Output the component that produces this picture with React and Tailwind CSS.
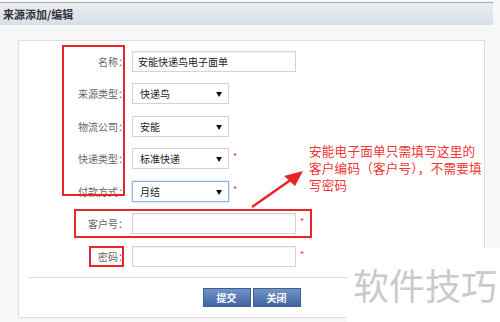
import React from 'react'

const rows = [
  { label: '名称：', type: 'input', value: '安能快递鸟电子面单' },
  { label: '来源类型：', type: 'select', value: '快递鸟' },
  { label: '物流公司：', type: 'select', value: '安能' },
  { label: '快递类型：', type: 'select', value: '标准快递', required: true },
  { label: '付款方式：', type: 'select', value: '月结', required: true, focused: true },
  { label: '客户号：', type: 'input', value: '', required: true },
  { label: '密码：', type: 'input', value: '', required: true },
]

const FormRow = ({ row }) => {
  return (
    <div className="flex items-center h-[20px]">
      <div className="w-[109px] text-right text-[10px] text-[#666]">{row.label}</div>
      {row.type === 'input' ? (
        <div className="ml-[4px] w-[164px] h-[21px] border border-[#d4d4d4] bg-white shadow-[inset_0_1px_1px_rgba(0,0,0,0.06)] flex items-center px-[5px] text-[10px] text-[#222]">
          {row.value}
        </div>
      ) : (
        <div
          className={`ml-[4px] w-[97px] h-[21px] border bg-white flex items-center justify-between pl-[7px] pr-[6px] text-[10px] text-[#222] ${
            row.focused ? 'border-[#8fb3e0] shadow-[0_0_2px_#a9c7ee]' : 'border-[#d4d4d4]'
          }`}
        >
          <span>{row.value}</span>
          <span className="text-[6px] text-black">▼</span>
        </div>
      )}
      {row.required && <span className="ml-[4px] text-[9px] text-[#e33] -mt-[4px]">*</span>}
    </div>
  )
}

export default function App() {
  return (
    <div
      className="relative w-[500px] h-[322px] overflow-hidden bg-[#f7f7f7]"
      style={{ fontFamily: '"Noto Sans CJK SC", "Noto Sans", sans-serif' }}
    >
      {/* Title bar */}
      <div className="mt-[2px] mr-[7px] h-[23px] border-t border-[#a9a9a9] bg-gradient-to-b from-[#e9edf2] to-[#d8dfe8] flex items-center pl-[3px]">
        <span className="text-[11px] font-bold text-[#333]">来源添加/编辑</span>
      </div>

      {/* Form panel */}
      <div className="pt-[15px] pl-[18px] pr-[15px]">
        <div className="border border-[#dedede] bg-white pt-[10px] pb-[10px]">
          <div className="flex flex-col gap-[12.6px]">
            {rows.map((row, i) => (
              <FormRow key={i} row={row} />
            ))}
          </div>
          <div className="mt-[10px] mx-[9px] border-t border-[#dcdcdc]" />
          <div className="mt-[10px] flex justify-center gap-[2px]">
            <button className="w-[48px] h-[19px] border border-[#3d5f92] bg-gradient-to-b from-[#7394c6] to-[#3f64a0] text-white text-[10px] font-bold">
              提交
            </button>
            <button className="w-[48px] h-[19px] border border-[#3d5f92] bg-gradient-to-b from-[#7394c6] to-[#3f64a0] text-white text-[10px] font-bold">
              关闭
            </button>
          </div>
        </div>
      </div>

      {/* Annotations */}
      <div className="absolute left-[62px] top-[45px] w-[63px] h-[151px] border-2 border-[#e8262a]" />
      <div className="absolute left-[74px] top-[209px] w-[238px] h-[29px] border-2 border-[#e8262a]" />
      <div className="absolute left-[89px] top-[246px] w-[35px] h-[21px] border-2 border-[#e8262a]" />

      <svg className="absolute left-0 top-0" width="500" height="322">
        <line x1="252" y1="207" x2="292" y2="179" stroke="#e8262a" strokeWidth="2.5" />
        <polygon points="303,171 284,176 295,186" fill="#e8262a" />
      </svg>

      <div className="absolute left-[309px] top-[142px] text-[12.6px] leading-[17px] tracking-[0.2px] text-[#ef3434] whitespace-nowrap">
        <div>安能电子面单只需填写这里的</div>
        <div>客户编码（客户号），不需要填</div>
        <div>写密码</div>
      </div>

      {/* Watermark */}
      <div className="absolute left-[347px] top-[248px] w-[153px] h-[74px] bg-white">
        <div className="pt-[18px] pl-[6px] text-[36px] leading-[36px] text-[#cacaca] whitespace-nowrap">
          软件技巧
        </div>
      </div>
    </div>
  )
}
